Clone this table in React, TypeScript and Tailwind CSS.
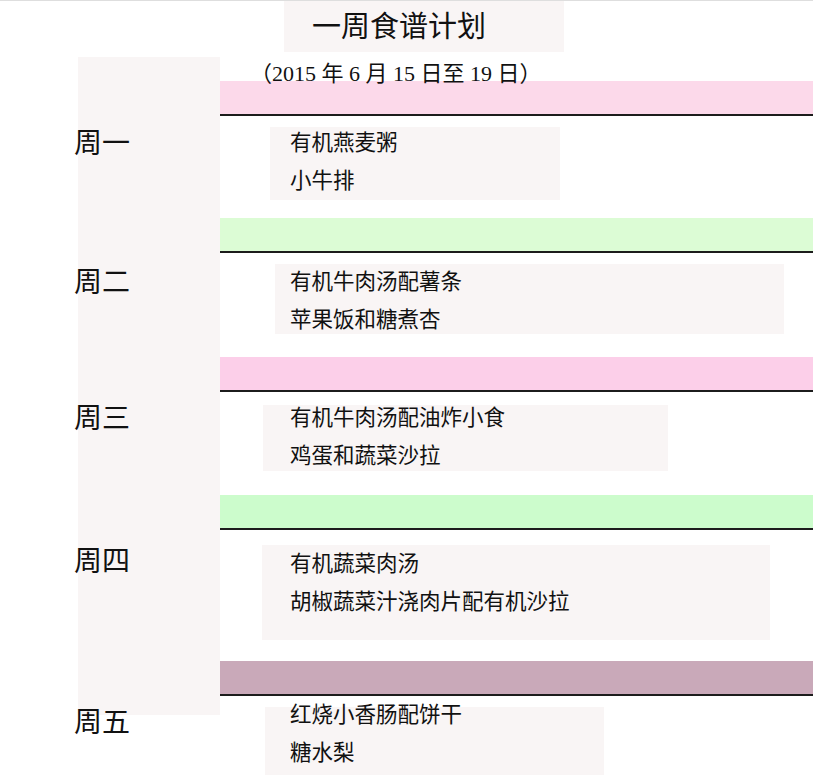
const days = [
  {
    label: '周一',
    bar: 'bg-[#fcd9ea]',
    rowH: 'h-[102px]',
    labelPt: 'pt-[11px]',
    box: 'mt-[11px] ml-[50px] w-[290px] h-[73px] pl-[20px]',
    listOffset: '-mt-[2px]',
    items: ['有机燕麦粥', '小牛排'],
  },
  {
    label: '周二',
    bar: 'bg-[#dcfcd5]',
    rowH: 'h-[104px]',
    labelPt: 'pt-[13px]',
    box: 'mt-[11px] ml-[55px] w-[509px] h-[70px] pl-[15px]',
    listOffset: 'mt-0',
    items: ['有机牛肉汤配薯条', '苹果饭和糖煮杏'],
  },
  {
    label: '周三',
    bar: 'bg-[#fccfe9]',
    rowH: 'h-[103px]',
    labelPt: 'pt-[10px]',
    box: 'mt-[13px] ml-[43px] w-[405px] h-[66px] pl-[27px]',
    listOffset: '-mt-[5px]',
    items: ['有机牛肉汤配油炸小食', '鸡蛋和蔬菜沙拉'],
  },
  {
    label: '周四',
    bar: 'bg-[#ccfccc]',
    rowH: 'h-[131px]',
    labelPt: 'pt-[15px]',
    box: 'mt-[15px] ml-[42px] w-[508px] h-[95px] pl-[28px]',
    listOffset: 'mt-[1px]',
    items: ['有机蔬菜肉汤', '胡椒蔬菜汁浇肉片配有机沙拉'],
  },
  {
    label: '周五',
    bar: 'bg-[#c9a9b9]',
    rowH: 'h-[79px]',
    labelPt: 'pt-[10px]',
    box: 'mt-[11px] ml-[45px] w-[339px] h-[70px] pl-[25px]',
    listOffset: '-mt-[10px]',
    items: ['红烧小香肠配饼干', '糖水梨'],
  },
]

export default function App() {
  return (
    <div className="relative w-[813px] h-[775px] overflow-hidden bg-white text-[#111] font-['Liberation_Serif','Noto_Sans_CJK_SC',serif]">
      <div className="h-px bg-[#dedede]" />

      {/* left shaded column, sits behind the day labels */}
      <div className="absolute left-[78px] top-[57px] w-[142px] h-[658px] bg-[#f9f5f5]" />

      <div className="relative">
        <div className="ml-[284px] w-[280px] h-[51px] bg-[#f9f5f5] pl-[28px] pt-[7px]">
          <h1 className="text-[29px] leading-[32px] font-['Noto_Sans_CJK_SC',sans-serif]">一周食谱计划</h1>
        </div>

        <div className="h-[29px] pl-[250px] pt-[11px] text-[22px] leading-[22px]">
          （2015 年 6 月 15 日至 19 日）
        </div>

        {days.map(day => (
          <div key={day.label}>
            <div className={`ml-[220px] h-[33px] ${day.bar}`} />
            <div className="ml-[220px] h-[2px] bg-[#1c1c1c]" />
            <div className={`flex ${day.rowH}`}>
              <div className={`w-[220px] shrink-0 pl-[74px] ${day.labelPt}`}>
                <span className="text-[28px] leading-[28px] font-['Noto_Sans_CJK_SC',sans-serif]">{day.label}</span>
              </div>
              <div className={`shrink-0 bg-[#f9f5f5] -ml-[220px] ${day.box}`}>
                <div className={`flex flex-col gap-[6px] ${day.listOffset}`}>
                  {day.items.map(item => (
                    <div key={item} className="text-[21.5px] leading-[32px] font-['Noto_Sans_CJK_SC',sans-serif]">{item}</div>
                  ))}
                </div>
              </div>
            </div>
          </div>
        ))}
      </div>
    </div>
  )
}
